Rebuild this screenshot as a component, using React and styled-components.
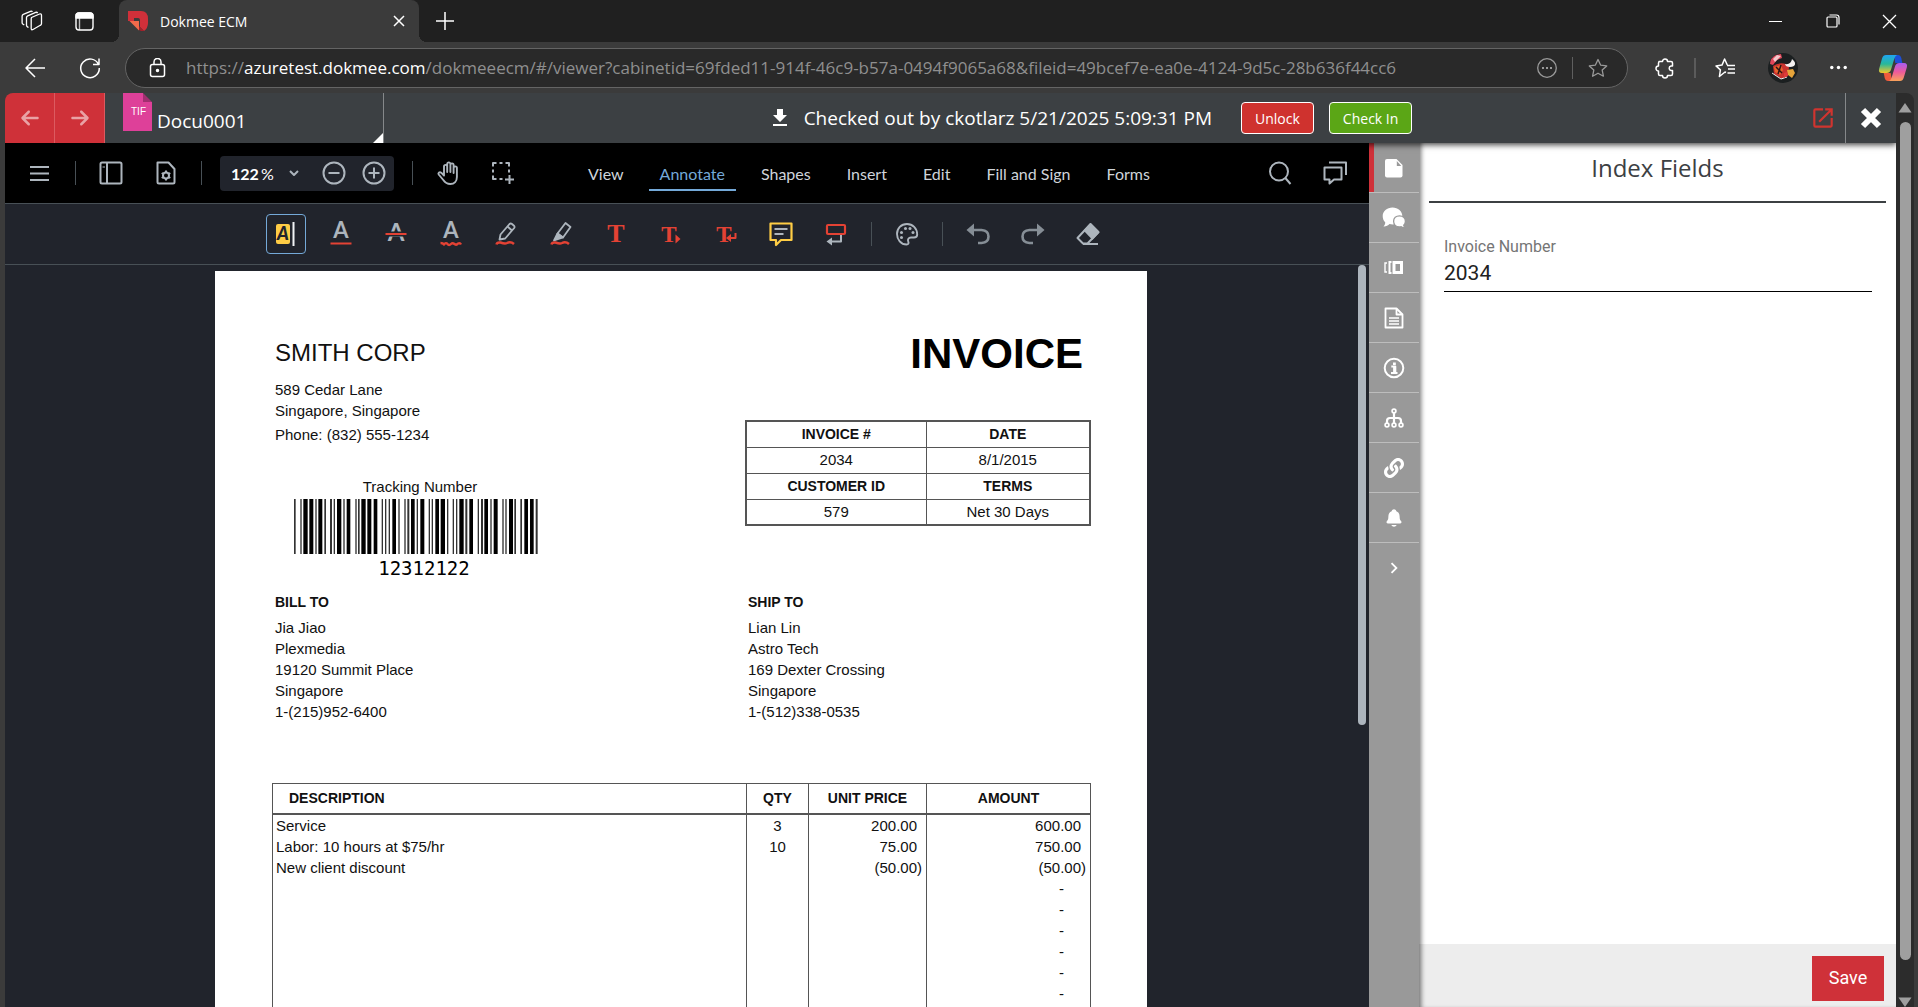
import React, { useState } from 'react';
import styled, { createGlobalStyle } from 'styled-components';
import { MdFileDownload, MdOpenInNew, MdChevronRight } from 'react-icons/md';
import { FaArrowLeft, FaArrowRight } from 'react-icons/fa6';
import { FaLink } from 'react-icons/fa';
import { IoNotifications } from 'react-icons/io5';

const UI_FONT = "'Open Sans', 'Noto Sans', sans-serif";

const GlobalStyle = createGlobalStyle`
  * { box-sizing: border-box; }
  body {
    margin: 0;
    background: #3b3b3b;
    font-family: ${UI_FONT};
  }
  button, input { font: inherit; margin: 0; }
`;

const Window = styled.div`
  display: flex;
  flex-direction: column;
  height: 100vh;
  overflow: hidden;
`;

const IconButton = styled.button`
  display: flex;
  align-items: center;
  justify-content: center;
  flex: none;
  width: ${(p) => p.$w || 40}px;
  height: ${(p) => p.$h || 40}px;
  padding: 0;
  border: 0;
  background: none;
  color: ${(p) => p.$color || '#fff'};
  cursor: pointer;
  svg { overflow: visible; }
`;

const Rule = styled.span`
  flex: none;
  width: ${(p) => p.$w || 1}px;
  height: ${(p) => p.$h || 24}px;
  background: ${(p) => p.$color || '#485056'};
`;

/* ---------- browser chrome ---------- */

const TabStrip = styled.div`
  display: flex;
  align-items: center;
  flex: none;
  height: 42px;
  background: #202020;
`;

const StripStart = styled.div`
  display: flex;
  gap: 4px;
  padding: 0 11px 0 8px;
`;

const BrowserTab = styled.div`
  position: relative;
  display: flex;
  align-items: center;
  width: 300px;
  height: 42px;
  padding: 0 4px 0 9px;
  border-radius: 8px 8px 0 0;
  background: #3b3b3b;
  color: #fff;
  font-size: 14px;

  &::before,
  &::after {
    content: '';
    position: absolute;
    bottom: 0;
    width: 8px;
    height: 8px;
  }
  &::before {
    left: -8px;
    background: radial-gradient(circle at 0 0, transparent 8px, #3b3b3b 8px);
  }
  &::after {
    right: -8px;
    background: radial-gradient(circle at 100% 0, transparent 8px, #3b3b3b 8px);
  }
`;

const TabTitle = styled.span`
  flex: 1;
  padding-left: 12px;
`;

const WindowButtons = styled.div`
  display: flex;
  margin-left: auto;
`;

const AddressRow = styled.div`
  display: flex;
  align-items: center;
  flex: none;
  height: 51px;
  padding: 0 5px 0 15px;
`;

const NavButtons = styled.div`
  display: flex;
  gap: 15px;
  padding-right: 15px;
`;

const AddressBar = styled.div`
  display: flex;
  align-items: center;
  flex: 1;
  min-width: 0;
  height: 40px;
  padding: 0 19px 0 22px;
  border: 1px solid #646464;
  border-radius: 20px;
  background: #292929;
  color: #fff;
`;

const Url = styled.div`
  flex: 1;
  min-width: 0;
  padding-left: 18px;
  overflow: hidden;
  white-space: nowrap;
  font-size: 17px;
  line-height: 26px;
  color: #8f8f8f;
  b { font-weight: 400; color: #fff; }
`;

const BarActions = styled.div`
  display: flex;
  align-items: center;
  gap: 15px;
`;

const Extensions = styled.div`
  display: flex;
  align-items: center;
  gap: 9px;
  padding: 0 18px 0 17px;
`;

/* ---------- application frame ---------- */

const PageArea = styled.div`
  display: flex;
  flex: 1;
  min-height: 0;
  padding: 0 4px 0 5px;
`;

const AppFrame = styled.div`
  display: flex;
  flex-direction: column;
  flex: 1;
  min-width: 0;
  border-radius: 8px 0 0 0;
  overflow: hidden;
`;

const PageScroll = styled.div`
  display: flex;
  flex-direction: column;
  align-items: center;
  width: 18px;
  padding: 10px 0 0;
  border-radius: 0 8px 0 0;
  background: #2c2c2c;
`;

const PageThumb = styled.div`
  flex: 1;
  width: 11px;
  margin: 9px 0 37px;
  border-radius: 6px;
  background: #9f9f9f;
`;

const AppHeader = styled.header`
  position: relative;
  z-index: 2;
  display: flex;
  align-items: center;
  flex: none;
  height: 50px;
  background: #3c4043;
  color: #fff;
  box-shadow: 0 2px 6px rgba(0, 0, 0, 0.7);
`;

const ArrowButton = styled(IconButton)`
  background: #cf3139;
  border-right: 1px solid #dc5a60;
  color: rgba(255, 255, 255, 0.55);
`;

const FileTab = styled.div`
  position: relative;
  display: flex;
  width: 279px;
  height: 50px;
  padding-left: 18px;
  border-right: 1px solid #85888a;

  &::after {
    content: '';
    position: absolute;
    right: 0;
    bottom: 0;
    border: 5px solid;
    border-color: transparent #fff #fff transparent;
  }
`;

const FileName = styled.span`
  padding: 14px 0 0 5px;
  font-size: 19px;
  line-height: 28px;
`;

const CheckedOut = styled.div`
  display: flex;
  align-items: center;
  flex: 1;
  justify-content: center;
  gap: 12px;
  padding-right: 5px;
  font-size: 19px;
  white-space: nowrap;
`;

const StatusButtons = styled.div`
  display: flex;
  gap: 15px;
  margin-left: 17px;
`;

const PillButton = styled.button`
  height: 32px;
  padding: 0 13px;
  border: 1px solid #fff;
  border-radius: 4px;
  background: ${(p) => p.$bg};
  color: #fff;
  font-size: 14px;
`;

const Workspace = styled.main`
  display: flex;
  flex: 1;
  min-height: 0;
`;

/* ---------- viewer ---------- */

const Viewer = styled.section`
  display: flex;
  flex-direction: column;
  flex: 1;
  min-width: 0;
  background: #21242c;
  font-family: Lato, sans-serif;
`;

const MainBar = styled.div`
  display: flex;
  align-items: center;
  flex: none;
  height: 61px;
  padding: 0 14px 0 15px;
  border-bottom: 1px solid #485056;
  background: #000;
`;

const ToolGroup = styled.div`
  display: flex;
  align-items: center;
  gap: 15px;
`;

const ZoomBox = styled.div`
  display: flex;
  align-items: center;
  width: 174px;
  height: 35px;
  margin: 0 3px;
  padding-left: 11px;
  border-radius: 4px;
  background: #21242c;
  color: #fff;
  font-size: 16px;
`;

const ZoomInput = styled.input`
  width: 30px;
  padding: 0;
  border: 0;
  outline: 0;
  background: none;
  color: #fff;
  font-weight: 700;
`;

const Ribbon = styled.nav`
  display: flex;
  gap: 14px;
  margin: 0 auto 0 54px;
`;

const RibbonItem = styled.button`
  height: 36px;
  padding: 2px 11px 0;
  border: 0;
  border-bottom: 2px solid ${(p) => (p.$active ? '#74a9d8' : 'transparent')};
  background: none;
  color: ${(p) => (p.$active ? '#74a9d8' : '#cfd4da')};
  font-size: 16px;
  white-space: nowrap;
`;

const AnnotateBar = styled.div`
  display: flex;
  align-items: center;
  justify-content: center;
  flex: none;
  gap: 15px;
  height: 61px;
  border-bottom: 1px solid #485056;
`;

const ToolButton = styled(IconButton)`
  border: 1px solid ${(p) => (p.$active ? '#74a9d8' : 'transparent')};
  border-radius: 4px;
  color: #adb5bd;
`;

const DocScroll = styled.div`
  display: flex;
  flex: 1;
  min-height: 0;
  overflow: hidden;
`;

const DocCanvas = styled.div`
  display: flex;
  justify-content: center;
  flex: 1;
  padding-top: 6px;
`;

const DocTrack = styled.div`
  width: 12px;
  padding: 0 3px 0 1px;
`;

const DocThumb = styled.div`
  height: 62%;
  border-radius: 4px;
  background: #adb5bd;
`;

/* ---------- invoice sheet ---------- */

const Sheet = styled.article`
  flex: none;
  width: 932px;
  height: 1206px;
  padding: 59px 56px 0 57px;
  background: #fff;
  color: #111;
  font: 15px/21px 'Liberation Sans', Arial, sans-serif;
`;

const SheetTop = styled.div`
  display: flex;
  justify-content: space-between;
`;

const Company = styled.div`
  padding: 9px 0 0 3px;
  h2 {
    margin: 0 0 12px;
    font-size: 24px;
    line-height: 28px;
    font-weight: 400;
  }
  p { margin: 0; }
`;

const Phone = styled.p`
  && { margin-top: 3px; }
`;

const Tracking = styled.div`
  display: flex;
  flex-direction: column;
  align-items: center;
  gap: 2px;
  width: 244px;
  margin: 31px 0 0 19px;
`;

const TrackingLabel = styled.span`
  padding-left: 8px;
`;

const TrackingCode = styled.span`
  padding-left: 16px;
  font: 19px/24px 'DejaVu Sans Mono', monospace;
  color: #000;
`;

const InvoiceHead = styled.div`
  width: 346px;
  h1 {
    margin: 0 0 42px;
    padding-right: 8px;
    font-size: 42px;
    line-height: 48px;
    font-weight: 700;
    text-align: right;
    color: #000;
  }
`;

const InfoTable = styled.table`
  width: 100%;
  border-collapse: collapse;
  table-layout: fixed;
  border: 2px solid #555;
  th, td {
    height: 26px;
    padding: 0;
    border: 1px solid #555;
    text-align: center;
    line-height: 20px;
  }
  th { font-size: 14px; }
`;

const Parties = styled.div`
  display: grid;
  grid-template-columns: 473px 1fr;
  margin: 12px 0 61px;
  padding-left: 3px;
  h3 {
    margin: 0 0 5px;
    font-size: 14px;
    line-height: 20px;
  }
  p { margin: 0; }
`;

const ItemTable = styled.table`
  width: 819px;
  border-collapse: collapse;
  table-layout: fixed;
  th {
    height: 30px;
    padding: 0;
    border: 1px solid #555;
    border-bottom-width: 2px;
    font-size: 14px;
    line-height: 20px;
  }
  th:first-child { padding-left: 16px; text-align: left; }
  td {
    height: 21px;
    padding: 0 0 0 3px;
    border: 0 solid #555;
    border-width: 0 1px;
    line-height: 21px;
  }
`;

const Qty = styled.td`
  && { padding: 0; text-align: center; }
`;

const Money = styled.td`
  && {
    padding: 0 ${(p) => p.$end}px 0 0;
    text-align: right;
  }
`;

const BlankCell = styled.td`
  && { height: 200px; }
`;

/* ---------- index panel ---------- */

const SideRail = styled.aside`
  flex: none;
  width: 50px;
  background: #999;
`;

const RailButton = styled.button`
  display: flex;
  align-items: center;
  justify-content: center;
  width: 50px;
  height: 50px;
  padding: 0 12px 0 0;
  padding: 0;
  border: 0;
  border-bottom: 1px solid ${(p) => (p.$last ? 'transparent' : '#bdbdbd')};
  background: none;
  box-shadow: ${(p) => (p.$active ? 'inset 5px 0 #cf3139' : 'none')};
  color: #fff;
`;

const Panel = styled.section`
  display: flex;
  flex-direction: column;
  flex: none;
  width: 477px;
  background: #fff;
  box-shadow: inset 5px 0 5px -3px rgba(0, 0, 0, 0.55);
`;

const PanelTitle = styled.h2`
  margin: 0 10px 0 10px;
  padding: 9px 0 17px;
  border-bottom: 2px solid #3c4043;
  color: #3c4043;
  font-size: 24px;
  line-height: 32px;
  font-weight: 400;
  text-align: center;
`;

const Field = styled.div`
  display: flex;
  flex-direction: column;
  margin: 32px 24px auto 25px;
  border-bottom: 1px solid #000;
  font-family: Roboto, sans-serif;
  label {
    color: #757575;
    font-size: 16px;
    line-height: 24px;
  }
  input {
    height: 32px;
    padding: 0 0 4px;
    border: 0;
    outline: 0;
    background: none;
    color: #212121;
    font-size: 21px;
  }
`;

const PanelFooter = styled.footer`
  display: flex;
  justify-content: flex-end;
  padding: 12px 12px 6px;
  background: rgba(0, 0, 0, 0.07);
`;

const SaveButton = styled.button`
  width: 72px;
  height: 45px;
  padding: 0 0 2px;
  border: 0;
  background: #cf3139;
  color: #fff;
  font-family: Roboto, sans-serif;
  font-size: 18px;
`;

/* ---------- icons ---------- */

const RED = '#e44234';
const YELLOW = '#ffcd45';

const Icon = ({ size = 24, box = 24, sw = 2, children, ...rest }) => (
  <svg
    width={size}
    height={size}
    viewBox={`0 0 ${box} ${box}`}
    fill="none"
    stroke="currentColor"
    strokeWidth={sw}
    strokeLinejoin="round"
    aria-hidden="true"
    {...rest}
  >
    {children}
  </svg>
);

const WorkspacesIcon = () => (
  <Icon size={22} box={22} sw={1.3}>
    <path d="M10.5 7.5l8-3.5q2-.6 2 1.2v8.3q0 1.2-1.2 1.8l-7.3 4.2q-1.8.8-1.8-1V9.2q0-1.2.3-1.7z" />
    <path d="M7.5 17.5l-1-.6q-1-.6-1-1.6V7.6q0-1.2 1.2-1.8l8-3.4q1.3-.5 1.9.7" />
    <path d="M3.3 15l-1.2-.7q-1-.6-1-1.6V6.2q0-1.2 1.2-1.8L9.5 1.3q1.3-.5 1.9.5" />
  </Icon>
);

const TabsIcon = () => (
  <Icon size={19} box={19} sw={1.4}>
    <rect x="1" y="1" width="17" height="17" rx="3" />
    <path d="M1 6V4q0-3 3-3h11q3 0 3 3v2z" fill="currentColor" />
    <path d="M4.5 6v12" strokeOpacity=".7" />
  </Icon>
);

const DokmeeLogo = () => (
  <svg width="20" height="20" viewBox="0 0 20 20" aria-hidden="true">
    <path d="M0 0h13q7 0 7 8v4q0 5-4 8l-4-4V9q0-2-2-2H6v3H0z" fill="#d0303a" />
    <path d="M1.5 10h9.500v9.500z" fill="#f26a4b" />
    <path d="M11 15l5 5h-3l-2-1z" fill="#a51f28" />
  </svg>
);

const StarPath = 'M10 1.5l2.600 5.600 6.100.8-4.500 4.200 1.200 6.100-5.400-3-5.400 3 1.200-6.100L1.300 7.900l6.100-.8z';

const AvatarIcon = () => (
  <svg width="30" height="30" viewBox="0 0 30 30" aria-hidden="true">
    <circle cx="15" cy="15" r="15" fill="#1b1f20" />
    <path d="M2 11q0-6 6-9l5-1 1 4-5 2-4 5z" fill="#e0475a" />
    <path d="M5 6l4-4 4 1-3 3-3 3z" fill="#f3c9cc" />
    <path d="M5 13q6-4 13-2l3 3-1 8-6 4-8-5z" fill="#c9332f" />
    <path d="M6 14l7-2 2 5-3 5-5-3z" fill="#e8622c" />
    <path d="M8 14l6 6M13 12l-3 9" stroke="#2a1313" strokeWidth="1.5" />
    <path d="M17 11q6 1 7-5 5 4 2 7-4 2-8 0z" fill="#f4f1f1" />
    <path d="M19 17l6-1 2 4-3 5-4-3z" fill="#e5a33a" />
    <path d="M4 20l9 6 6-2" stroke="#eee" fill="none" />
    <path d="M16 20l3-1 1 4-4 2z" fill="#e03a3a" />
  </svg>
);

const CopilotIcon = () => (
  <svg width="28" height="26" viewBox="0 0 28 26" aria-hidden="true">
    <defs>
      <linearGradient id="cpA" x1="0" y1="0" x2="0" y2="1">
        <stop offset="0" stopColor="#1fa5f2" />
        <stop offset=".5" stopColor="#27b89a" />
        <stop offset="1" stopColor="#f3c62a" />
      </linearGradient>
      <linearGradient id="cpB" x1="0" y1="0" x2="0" y2="1">
        <stop offset="0" stopColor="#a85cf0" />
        <stop offset=".5" stopColor="#ee5a9a" />
        <stop offset="1" stopColor="#f9a25a" />
      </linearGradient>
    </defs>
    <path d="M15 0h4q2.500 0 3.300 3l1 5h-7z" fill="#1c4fd8" />
    <path d="M13 26H9q-2.500 0-3.300-3l-1-5h7z" fill="#f05a3c" />
    <path d="M7 0h11q-2 1-2.800 4l-3 10q-1 4-4.700 4H3q-4 0-2.800-4.500l3-10.500Q4.200 0 7 0z" fill="url(#cpA)" />
    <path d="M21 26H10q2-1 2.800-4l3-10q1-4 4.700-4H25q4 0 2.800 4.500l-3 10Q23.800 26 21 26z" fill="url(#cpB)" />
  </svg>
);

const TifIcon = () => (
  <svg width="29" height="38" viewBox="0 0 29 38" aria-hidden="true">
    <path d="M0 0h20l9 9v29H0z" fill="#de4099" />
    <path d="M20 0h9v9h-9z" fill="#3c4043" />
    <path d="M20 0l9 9h-9z" fill="#a12f70" />
    <text x="8" y="22" fill="#fff" fontSize="10" fontFamily="Liberation Sans">TIF</text>
  </svg>
);

const LetterA = ({ y = 16, size = 22 }) => (
  <text x="12" y={y} fill="currentColor" stroke="none" fontSize={size} fontWeight="700" fontFamily="Lato" textAnchor="middle">A</text>
);

const LetterT = ({ x = 12, size = 23 }) => (
  <text x={x} y="20" fill={RED} stroke="none" fontSize={size} fontWeight="700" fontFamily="Liberation Serif" textAnchor="middle">T</text>
);

const MenuIcon = () => (
  <Icon sw={2}>
    <path d="M2 6h19M2 12.5h19M2 19h19" />
  </Icon>
);

const PanelIcon = () => (
  <Icon>
    <rect x="1.5" y="1.5" width="21" height="21" rx="1.5" />
    <path d="M8 2v20" />
    <path d="M3.5 6h2.5" strokeWidth="1" />
  </Icon>
);

const PageSettingsIcon = () => (
  <Icon>
    <path d="M3.5 1.5h11l6 6.500v13q0 1.500-1.500 1.500H5q-1.500 0-1.500-1.500z" />
    <circle cx="12" cy="14.5" r="3" />
    <path d="M12 9.5v2M12 17.5v2M7.700 12l1.700 1M14.600 16l1.700 1M7.700 17l1.700-1M14.600 13l1.700-1" />
  </Icon>
);

const HandIcon = () => (
  <Icon sw={1.9} strokeLinecap="round">
    <path d="M8 13V5.500a1.600 1.600 0 0 1 3.200 0V11V3a1.600 1.600 0 0 1 3.200 0v8V4a1.600 1.600 0 0 1 3.200 0v8V7a1.600 1.600 0 0 1 3.300 0v9c0 4-2.500 7-6.600 7-3.500 0-5.300-1.500-7-4l-4.600-5.500c-1-1.700 1-3 2.500-1.800L8 14.500z" />
  </Icon>
);

const MarqueeIcon = () => (
  <Icon>
    <path d="M2 5.500V2h3.500M8.500 2h3M14.500 2H18v3.500M18 8.500v3M2 8.500v3M2 14.500V18h3.500M8.500 18h3" />
    <path d="M18.500 14v9M14 18.500h9" />
  </Icon>
);

const SearchIcon = () => (
  <Icon>
    <circle cx="11" cy="10.5" r="9" />
    <path d="M17.300 17l5.200 6" />
  </Icon>
);

const NotesIcon = () => (
  <Icon>
    <path d="M1.500 6.500h17v12H11l-4.500 4v-4h-5z" />
    <path d="M6 1.500h17v12.500" />
  </Icon>
);

const HighlightIcon = () => (
  <Icon>
    <rect x="2" y="2" width="14" height="20" rx="2" fill={YELLOW} stroke="none" />
    <text x="3" y="18" fill="#21242c" stroke="none" fontSize="18" fontWeight="900" fontStyle="italic" fontFamily="Lato">A</text>
    <path d="M19.500 0v24" stroke="#f1f3f5" />
  </Icon>
);

const PenIcon = ({ freehand }) => (
  <Icon sw={1.8}>
    {freehand ? (
      <>
        <path d="M5.500 17.500l1-5 9-10.500q1.200-1 2.500 0l2 1.700q1 1 .2 2.300l-9 10.500z" />
        <path d="M13.500 4.500l4.500 4" />
      </>
    ) : (
      <>
        <path d="M8.500 11.500L16.500 1l5 4-7.500 10.500z" />
        <path d="M8.500 11.500L5 18.500l9-3z" fill="currentColor" />
      </>
    )}
    <path d="M2.500 22.500q.5-2.500 4-2 4.500 1.500 6.500.5 3.500-2 7 1" stroke={RED} strokeWidth="2.5" />
  </Icon>
);

const NoteIcon = () => (
  <Icon sw={2.2}>
    <path d="M1.500 1.500h21v16.500h-10.500l-5 5v-5H1.500z" stroke={YELLOW} />
    <path d="M5.500 7h13M5.500 12h9" strokeWidth="1.9" />
  </Icon>
);

const CalloutIcon = () => (
  <Icon>
    <rect x="3" y="3" width="18" height="9" rx="1" stroke={RED} strokeWidth="2.2" />
    <path d="M17 13v6.500H6" />
    <path d="M8 15.500v8l-5.500-4z" fill="currentColor" stroke="none" />
  </Icon>
);

const PaletteIcon = () => (
  <Icon sw={1.9}>
    <path d="M12 2C6 2 2 6.500 2 12s4 10.500 9.500 10.500c2 0 2.500-1.500 1.700-3-.8-2 .3-4 2.800-4h3c2 0 3.200-1.200 3.200-3C22.200 6 17.500 2 12 2z" />
    <g fill="currentColor" stroke="none">
      <circle cx="6.5" cy="15.5" r="1.5" />
      <circle cx="6.5" cy="10.5" r="1.5" />
      <circle cx="10.5" cy="6.5" r="1.5" />
      <circle cx="15" cy="6.5" r="1.5" />
      <circle cx="18" cy="10.5" r="1.5" />
    </g>
  </Icon>
);

const UndoIcon = ({ flip }) => (
  <Icon sw={2.6} stroke="#868e96" transform={flip ? 'scale(-1 1)' : undefined}>
    <path d="M5 8h10.500q7 .5 7 6.500t-7 6.500H12" />
    <path d="M8 1.500v13L.5 8z" fill="#868e96" stroke="none" />
  </Icon>
);

const EraserIcon = () => (
  <Icon>
    <path d="M14.500 2l8 8-11 11.500H7L1.500 16z" />
    <path d="M14.500 1l9 9.500-7 7.500-9-9.500z" fill="currentColor" stroke="none" />
    <path d="M7 22h15" />
  </Icon>
);

const CrossIcon = () => (
  <Icon size={22} box={22} sw={6}>
    <path d="M3 3l16 16M19 3L3 19" />
  </Icon>
);

const SheetIcon = () => (
  <Icon size={20} box={20} stroke="none">
    <path d="M3 1h9.500l6 6v10.500q0 2-2 2H3q-2 0-2-2V3q0-2 2-2z" fill="currentColor" />
    <path d="M12.800 3v5h4.500z" fill="#999" />
  </Icon>
);

const CommentsIcon = () => (
  <Icon size={24} box={24} stroke="none">
    <path d="M10.500 1.500c5.600 0 9.800 3.700 9.800 8.500s-4.200 8.500-9.800 8.500c-1 0-2-.1-3-.4-1.500 1.500-3.700 2.600-6 2.400 1.200-1.200 1.800-2.800 1.700-4.300C1.500 14.700.7 12.500.7 10c0-4.800 4.200-8.500 9.800-8.500z" fill="currentColor" />
    <path
      d="M17.500 9.800c3.400 0 5.900 2.400 5.900 5.500 0 1.700-.6 3-1.700 4 .1 1 .7 1.900 1.500 2.700-1.600.1-3-.4-4-1.300-.5.1-1.100.2-1.700.2-3.400 0-5.900-2.400-5.900-5.600s2.500-5.500 5.900-5.500z"
      fill="currentColor"
      stroke="#999"
      strokeWidth="1.3"
    />
  </Icon>
);

const VersionsIcon = () => (
  <Icon size={20} box={20} sw={3} strokeLinejoin="miter">
    <rect x="10" y="4.5" width="7.5" height="10" />
    <path d="M7.500 4H5.500v11h2" strokeWidth="2" />
    <path d="M3 5H1v9h2" strokeWidth="1.4" />
  </Icon>
);

const FileTextIcon = () => (
  <Icon size={22} box={22} sw={1.8}>
    <path d="M2.500 1.500h11l6 6v13h-17z" />
    <path d="M13.500 1.500v6h6" />
    <path d="M6 11h10M6 14h10M6 17h10" strokeWidth="1.6" />
  </Icon>
);

const InfoIcon = () => (
  <Icon size={22} box={22}>
    <circle cx="11" cy="11" r="9.3" />
    <path d="M8.300 9.500h4v6M8 16h6.500" strokeWidth="2" />
    <path d="M10 5.500h2.800V8H10z" fill="currentColor" stroke="none" />
    <path d="M11.400 9v7" strokeWidth="2.6" />
  </Icon>
);

const TreeIcon = () => (
  <Icon size={20} box={20} sw={1.7}>
    <circle cx="10" cy="3" r="1.9" />
    <circle cx="3" cy="17" r="1.9" />
    <circle cx="10" cy="17" r="1.9" />
    <circle cx="17" cy="17" r="1.9" />
    <path d="M10 5v10M3 15v-2q0-3 3-3h8q3 0 3 3v2" strokeWidth="2.2" />
  </Icon>
);

// x offset and width of every bar, on a 732 unit wide strip
const BARS = [
  [0, 5], [19, 4], [28, 13], [46, 12], [64, 4], [73, 12], [91, 5], [108, 6], [119, 4], [129, 13],
  [148, 4], [158, 11], [184, 4], [192, 5], [202, 13], [220, 12], [239, 11], [263, 4], [273, 4],
  [284, 4], [295, 11], [313, 4], [331, 4], [340, 6], [351, 11], [368, 4], [379, 12], [404, 4],
  [413, 4], [424, 11], [440, 13], [459, 4], [476, 4], [486, 4], [496, 13], [514, 6], [526, 11],
  [551, 4], [561, 6], [571, 11], [589, 4], [599, 12], [625, 4], [634, 4], [645, 12], [661, 5],
  [679, 5], [691, 11], [708, 11], [725, 6],
];

const Barcode = () => (
  <svg width="244" height="55" viewBox="0 0 732 165" preserveAspectRatio="none" aria-hidden="true">
    {BARS.map(([x, w]) => (
      <rect key={x} x={x} width={w} height="165" fill={w > 8 ? '#000' : '#333'} />
    ))}
  </svg>
);

/* ---------- data ---------- */

const RIBBON = ['View', 'Annotate', 'Shapes', 'Insert', 'Edit', 'Fill and Sign', 'Forms'];

const TOOLS = [
  ['Highlight', <HighlightIcon />],
  ['Underline', <Icon><LetterA /><path d="M1.500 21.500h21" stroke={RED} /></Icon>],
  ['Strikeout', <Icon><LetterA y={19} size={24} /><path d="M0 12h24" stroke="#21242c" strokeWidth="5" /><path d="M1.500 12h21" stroke={RED} /></Icon>],
  ['Squiggly', <Icon><LetterA /><path d="M1.500 21q2.500 0 3.500 1.500 2-2.500 3.500-.5 1.500 2 3.500 0 1.500-1.500 3.500 0 2 1.500 3.500-.5 2-1 3 1" stroke={RED} strokeWidth="2.4" /></Icon>],
  ['Freehand', <PenIcon freehand />],
  ['Freehand highlight', <PenIcon />],
  ['Free text', <Icon><LetterT size={26} /></Icon>],
  ['Insert text', <Icon><LetterT x={10} /><path d="M16.500 12.500v9l5-4.500z" fill={RED} stroke="none" /></Icon>],
  ['Replace text', <Icon><LetterT x={10} /><path d="M21.500 11v5h-6" stroke={RED} /><path d="M17 12v8l-5-4z" fill={RED} stroke="none" /></Icon>],
  ['Note', <NoteIcon />],
  ['Callout', <CalloutIcon />],
  null,
  ['Style', <PaletteIcon />],
  null,
  ['Undo', <UndoIcon />],
  ['Redo', <UndoIcon flip />],
  ['Eraser', <EraserIcon />],
];

const RAIL = [
  ['Index fields', <SheetIcon />],
  ['Comments', <CommentsIcon />],
  ['Versions', <VersionsIcon />],
  ['Text', <FileTextIcon />],
  ['Information', <InfoIcon />],
  ['Workflow', <TreeIcon />],
  ['Links', <FaLink size={20} />],
  ['Notifications', <IoNotifications size={20} />],
  ['More', <MdChevronRight size={22} />],
];

const ITEMS = [
  ['Service', '3', '200.00', '600.00'],
  ['Labor: 10 hours at $75/hr', '10', '75.00', '750.00'],
  ['New client discount', '', '(50.00)', '(50.00)'],
  ...Array.from({ length: 6 }, () => ['', '', '', '-']),
];

const endPad = (value) => {
  if (value === '-') return 26;
  return value.startsWith('(') ? 4 : 9;
};

/* ---------- sections ---------- */

const BrowserChrome = () => (
  <>
    <TabStrip>
      <StripStart>
        <IconButton $w={48} aria-label="Workspaces"><WorkspacesIcon /></IconButton>
        <IconButton $w={48} aria-label="Tab actions"><TabsIcon /></IconButton>
      </StripStart>
      <BrowserTab>
        <DokmeeLogo />
        <TabTitle>Dokmee ECM</TabTitle>
        <IconButton $w={32} $h={32} aria-label="Close tab">
          <Icon size={12} box={12} sw={1.5}><path d="M1 1l10 10M11 1L1 11" /></Icon>
        </IconButton>
      </BrowserTab>
      <IconButton $w={52} aria-label="New tab">
        <Icon size={18} box={18} sw={1.5}><path d="M9 0v18M0 9h18" /></Icon>
      </IconButton>
      <WindowButtons>
        <IconButton $w={57} aria-label="Minimize">
          <Icon size={13} box={13} sw={1} shapeRendering="crispEdges"><path d="M0 6.500h13" /></Icon>
        </IconButton>
        <IconButton $w={57} aria-label="Restore">
          <Icon size={14} box={14} sw={1.2}>
            <rect x="1" y="3" width="10" height="10" rx="1" />
            <path d="M3.500 1h7q2.500 0 2.500 2.500v7" />
          </Icon>
        </IconButton>
        <IconButton $w={57} aria-label="Close">
          <Icon size={13} box={13} sw={1.3}><path d="M0 0l13 13M13 0L0 13" /></Icon>
        </IconButton>
      </WindowButtons>
    </TabStrip>
    <AddressRow>
      <NavButtons>
        <IconButton aria-label="Back">
          <Icon size={20} box={20} sw={1.5}><path d="M20 10H1M10 1L1 10l9 9" /></Icon>
        </IconButton>
        <IconButton aria-label="Refresh">
          <Icon size={20} box={20} sw={1.5}><path d="M18.500 6.500A9.300 9.300 0 1 0 19.300 10M19 .5v6h-6" /></Icon>
        </IconButton>
      </NavButtons>
      <AddressBar>
        <Icon size={20} box={20} sw={1.5}>
          <rect x="2.5" y="6.5" width="14" height="12" rx="2" />
          <path d="M6 6.500V4q0-3.500 3.500-3.500T13 4v2.500" />
          <circle cx="9.5" cy="12.5" r="1" fill="currentColor" />
        </Icon>
        <Url>
          https://<b>azuretest.dokmee.com</b>/dokmeeecm/#/viewer?cabinetid=69fded11-914f-46c9-b57a-0494f9065a68&amp;fileid=49bcef7e-ea0e-4124-9d5c-28b636f44cc6
        </Url>
        <BarActions>
          <IconButton $w={20} $color="#9a9a9a" aria-label="Page info">
            <Icon size={20} box={20} sw={1.3}>
              <circle cx="10" cy="10" r="9.3" />
              <path d="M5 10h2M9 10h2M13 10h2" strokeWidth="2" />
            </Icon>
          </IconButton>
          <Rule $h={22} $color="#5f5f5f" />
          <IconButton $w={20} $color="#9a9a9a" aria-label="Add favorite">
            <Icon size={20} box={20} sw={1.3}><path d={StarPath} /></Icon>
          </IconButton>
        </BarActions>
      </AddressBar>
      <Extensions>
        <IconButton aria-label="Extensions">
          <Icon size={20} box={20} sw={1.5}>
            <path d="M4 3.500h3.500a2.500 2.500 0 0 1 5 0H16q1.500 0 1.500 1.500v3h-1.500a2.300 2.300 0 0 0 0 4.500h1.500V16q0 1.500-1.500 1.500h-3.500a2.500 2.500 0 0 1-5 0H5q-1.500 0-1.500-1.500v-3a2.500 2.500 0 0 1 0-5V5q0-1.500 1.500-1.500z" />
          </Icon>
        </IconButton>
        <Rule $w={2} $h={20} $color="#5b5b5b" />
        <IconButton aria-label="Favorites">
          <Icon size={20} box={20} sw={1.5}>
            <path d="M11 14.500l-1-.5-5.600 4.500 1-6.600L1 7.900l6-.8L9.600 1l2.700 6" />
            <path d="M12 7.500h8M13 11h7M12.500 15h7.500" />
          </Icon>
        </IconButton>
      </Extensions>
      <BarActions>
        <IconButton aria-label="Profile"><AvatarIcon /></IconButton>
        <IconButton aria-label="Settings and more">
          <Icon size={17} box={17} stroke="none">
            <g fill="currentColor">
              <circle cx="1.8" cy="8.5" r="1.7" />
              <circle cx="8.5" cy="8.5" r="1.7" />
              <circle cx="15.2" cy="8.5" r="1.7" />
            </g>
          </Icon>
        </IconButton>
        <IconButton aria-label="Copilot"><CopilotIcon /></IconButton>
      </BarActions>
    </AddressRow>
  </>
);

const Invoice = () => (
  <Sheet>
    <SheetTop>
      <Company>
        <h2>SMITH CORP</h2>
        <p>589 Cedar Lane</p>
        <p>Singapore, Singapore</p>
        <Phone>Phone: (832) 555-1234</Phone>
        <Tracking>
          <TrackingLabel>Tracking Number</TrackingLabel>
          <Barcode />
          <TrackingCode>12312122</TrackingCode>
        </Tracking>
      </Company>
      <InvoiceHead>
        <h1>INVOICE</h1>
        <InfoTable>
          <colgroup>
            <col width="180" />
            <col />
          </colgroup>
          <tbody>
            <tr><th>INVOICE #</th><th>DATE</th></tr>
            <tr><td>2034</td><td>8/1/2015</td></tr>
            <tr><th>CUSTOMER ID</th><th>TERMS</th></tr>
            <tr><td>579</td><td>Net 30 Days</td></tr>
          </tbody>
        </InfoTable>
      </InvoiceHead>
    </SheetTop>
    <Parties>
      <div>
        <h3>BILL TO</h3>
        <p>Jia Jiao</p>
        <p>Plexmedia</p>
        <p>19120 Summit Place</p>
        <p>Singapore</p>
        <p>1-(215)952-6400</p>
      </div>
      <div>
        <h3>SHIP TO</h3>
        <p>Lian Lin</p>
        <p>Astro Tech</p>
        <p>169 Dexter Crossing</p>
        <p>Singapore</p>
        <p>1-(512)338-0535</p>
      </div>
    </Parties>
    <ItemTable>
      <colgroup>
        <col width="474" />
        <col width="62" />
        <col width="118" />
        <col />
      </colgroup>
      <thead>
        <tr><th>DESCRIPTION</th><th>QTY</th><th>UNIT PRICE</th><th>AMOUNT</th></tr>
      </thead>
      <tbody>
        {ITEMS.map(([name, qty, price, amount], i) => (
          <tr key={i}>
            <td>{name}</td>
            <Qty>{qty}</Qty>
            <Money $end={endPad(price)}>{price}</Money>
            <Money $end={endPad(amount)}>{amount}</Money>
          </tr>
        ))}
        <tr><BlankCell /><BlankCell /><BlankCell /><BlankCell /></tr>
      </tbody>
    </ItemTable>
  </Sheet>
);

const DocumentViewer = () => {
  const [zoom, setZoom] = useState('122');
  const [tab, setTab] = useState('Annotate');
  const [tool, setTool] = useState('Highlight');

  return (
    <Viewer>
      <MainBar>
        <ToolGroup>
          <IconButton $color="#adb5bd" aria-label="Menu"><MenuIcon /></IconButton>
          <Rule />
          <IconButton $color="#adb5bd" aria-label="Panel"><PanelIcon /></IconButton>
          <IconButton $color="#adb5bd" aria-label="View controls"><PageSettingsIcon /></IconButton>
          <Rule />
          <ZoomBox>
            <ZoomInput aria-label="Zoom" value={zoom} onChange={(e) => setZoom(e.target.value)} />
            %
            <IconButton $w={40} $h={32} $color="#adb5bd" aria-label="Zoom presets">
              <Icon size={10} box={10}><path d="M1 3l4 4 4-4" /></Icon>
            </IconButton>
            <IconButton $w={40} $h={32} $color="#adb5bd" aria-label="Zoom out">
              <Icon><circle cx="12" cy="12" r="10.5" /><path d="M6.500 12h11" /></Icon>
            </IconButton>
            <IconButton $w={40} $h={32} $color="#adb5bd" aria-label="Zoom in">
              <Icon><circle cx="12" cy="12" r="10.5" /><path d="M6.500 12h11M12 6.500v11" /></Icon>
            </IconButton>
          </ZoomBox>
          <Rule />
          <IconButton $color="#adb5bd" aria-label="Pan"><HandIcon /></IconButton>
          <IconButton $color="#adb5bd" aria-label="Marquee zoom"><MarqueeIcon /></IconButton>
        </ToolGroup>
        <Ribbon>
          {RIBBON.map((name) => (
            <RibbonItem key={name} $active={name === tab} onClick={() => setTab(name)}>{name}</RibbonItem>
          ))}
        </Ribbon>
        <ToolGroup>
          <IconButton $color="#adb5bd" aria-label="Search"><SearchIcon /></IconButton>
          <IconButton $color="#adb5bd" aria-label="Notes"><NotesIcon /></IconButton>
        </ToolGroup>
      </MainBar>
      <AnnotateBar>
        {TOOLS.map((item, i) => (item ? (
          <ToolButton key={item[0]} aria-label={item[0]} $active={item[0] === tool} onClick={() => setTool(item[0])}>
            {item[1]}
          </ToolButton>
        ) : <Rule key={i} />))}
      </AnnotateBar>
      <DocScroll>
        <DocCanvas><Invoice /></DocCanvas>
        <DocTrack><DocThumb /></DocTrack>
      </DocScroll>
    </Viewer>
  );
};

const IndexPanel = () => {
  const [invoice, setInvoice] = useState('2034');

  return (
    <Panel>
      <PanelTitle>Index Fields</PanelTitle>
      <Field>
        <label htmlFor="invoice-number">Invoice Number</label>
        <input id="invoice-number" value={invoice} onChange={(e) => setInvoice(e.target.value)} />
      </Field>
      <PanelFooter>
        <SaveButton>Save</SaveButton>
      </PanelFooter>
    </Panel>
  );
};

const App = () => (
  <Window>
    <GlobalStyle />
    <BrowserChrome />
    <PageArea>
      <AppFrame>
        <AppHeader>
          <ArrowButton $w={50} $h={50} aria-label="Previous"><FaArrowLeft size={20} /></ArrowButton>
          <ArrowButton $w={50} $h={50} aria-label="Next"><FaArrowRight size={20} /></ArrowButton>
          <FileTab>
            <TifIcon />
            <FileName>Docu0001</FileName>
          </FileTab>
          <CheckedOut>
            <MdFileDownload size={24} />
            <span>Checked out by ckotlarz 5/21/2025 5:09:31 PM</span>
            <StatusButtons>
              <PillButton $bg="#cf322e">Unlock</PillButton>
              <PillButton $bg="#5ba616">Check In</PillButton>
            </StatusButtons>
          </CheckedOut>
          <IconButton $w={44} $color="#d0342f" aria-label="Open in new window"><MdOpenInNew size={26} /></IconButton>
          <Rule $h={50} $color="#85888a" />
          <IconButton $w={50} aria-label="Close document"><CrossIcon /></IconButton>
        </AppHeader>
        <Workspace>
          <DocumentViewer />
          <SideRail>
            {RAIL.map(([name, icon], i) => (
              <RailButton key={name} aria-label={name} $active={i === 0} $last={i === RAIL.length - 1}>{icon}</RailButton>
            ))}
          </SideRail>
          <IndexPanel />
        </Workspace>
      </AppFrame>
      <PageScroll>
        <svg width="14" height="10" viewBox="0 0 14 10" aria-hidden="true"><path d="M7 0l6.500 9.500H.5z" fill="#9f9f9f" /></svg>
        <PageThumb />
        <svg width="14" height="10" viewBox="0 0 14 10" aria-hidden="true"><path d="M.5.500h13L7 10z" fill="#9f9f9f" /></svg>
      </PageScroll>
    </PageArea>
  </Window>
);

export default App;
